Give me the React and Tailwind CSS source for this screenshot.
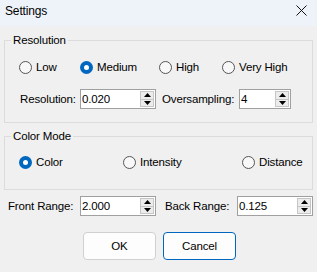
import React, { useState } from 'react';

const Radio = ({ checked, label, width, onClick }) => (
  <button
    type="button"
    onClick={onClick}
    className="flex items-center h-[15px] shrink-0 text-left"
    style={width ? { width } : undefined}
  >
    {checked ? (
      <span className="w-[13px] h-[13px] rounded-full bg-[#0067c0] flex items-center justify-center shrink-0">
        <span className="w-[5px] h-[5px] rounded-full bg-white" />
      </span>
    ) : (
      <span className="w-[13px] h-[13px] rounded-full border border-[#555] bg-[#f8f8f8] shrink-0" />
    )}
    <span className="ml-[4px]">{label}</span>
  </button>
);

const Spin = ({ value, width }) => (
  <div
    className="h-[20px] border border-[#a0a0a0] bg-white flex items-stretch shrink-0"
    style={{ width }}
  >
    <span className="flex-1 pl-[1px] leading-[18px]">{value}</span>
    <div className="w-[15px] flex flex-col py-[1px] pr-[1px]">
      <div className="flex-1 border border-[#c6c6c6] bg-[#ececec] flex items-center justify-center">
        <svg width="7" height="4" viewBox="0 0 7 4"><path d="M0 4 L3.5 0 L7 4 Z" fill="#000" /></svg>
      </div>
      <div className="flex-1 border border-t-0 border-[#c6c6c6] bg-[#ececec] flex items-center justify-center">
        <svg width="7" height="4" viewBox="0 0 7 4"><path d="M0 0 L3.5 4 L7 0 Z" fill="#000" /></svg>
      </div>
    </div>
  </div>
);

export default function App() {
  const [res, setRes] = useState('medium');
  const [mode, setMode] = useState('color');

  return (
    <div
      className="w-[317px] h-[272px] bg-[#f0f0f0] overflow-hidden text-[11.5px] leading-[15px] tracking-[-0.15px] text-black"
      style={{ fontFamily: '"Liberation Sans", Arial, sans-serif' }}
    >
      {/* Title bar */}
      <div className="h-[26px] bg-[#eef3fa] flex items-center justify-between pl-[5px] pr-[10px]">
        <span className="text-[12px] -mt-[4px]">Settings</span>
        <svg width="11" height="11" viewBox="0 0 11 11" className="-mt-[5px]">
          <path d="M0.5 0.5 L10.5 10.5 M10.5 0.5 L0.5 10.5" stroke="#111" strokeWidth="1" />
        </svg>
      </div>

      {/* Resolution */}
      <fieldset className="ml-[4px] mt-[7px] w-[309px] h-[90px] border border-[#dcdcdc]">
        <legend className="ml-[6px] px-[2px]">Resolution</legend>
        <div className="flex pl-[14px] pt-[12px]">
          <Radio width="61px" label="Low" checked={res === 'low'} onClick={() => setRes('low')} />
          <Radio width="79px" label="Medium" checked={res === 'medium'} onClick={() => setRes('medium')} />
          <Radio width="63px" label="High" checked={res === 'high'} onClick={() => setRes('high')} />
          <Radio label="Very High" checked={res === 'vhigh'} onClick={() => setRes('vhigh')} />
        </div>
        <div className="flex items-center pl-[15px] mt-[14px]">
          <span className="w-[60px] shrink-0">Resolution:</span>
          <Spin value="0.020" width="76px" />
          <span className="ml-[6px] w-[77px] shrink-0">Oversampling:</span>
          <Spin value="4" width="52px" />
        </div>
      </fieldset>

      {/* Color Mode */}
      <fieldset className="ml-[4px] mt-[6px] w-[309px] h-[61px] border border-[#dcdcdc]">
        <legend className="ml-[6px] px-[2px]">Color Mode</legend>
        <div className="flex pl-[14px] pt-[11px]">
          <Radio width="104px" label="Color" checked={mode === 'color'} onClick={() => setMode('color')} />
          <Radio width="119px" label="Intensity" checked={mode === 'intensity'} onClick={() => setMode('intensity')} />
          <Radio label="Distance" checked={mode === 'distance'} onClick={() => setMode('distance')} />
        </div>
      </fieldset>

      {/* Ranges */}
      <div className="flex items-center mt-[6px]">
        <span className="ml-[8px] w-[72px] shrink-0">Front Range:</span>
        <Spin value="2.000" width="76px" />
        <span className="ml-[9px] w-[72px] shrink-0">Back Range:</span>
        <Spin value="0.125" width="76px" />
      </div>

      {/* Buttons */}
      <div className="flex mt-[16px] ml-[83px] gap-[7px]">
        <button className="w-[73px] h-[28px] rounded-[4px] border border-[#d0d0d0] bg-[#fdfdfd]">OK</button>
        <button className="w-[73px] h-[28px] rounded-[4px] border border-[#0067c0] bg-[#fdfdfd]">Cancel</button>
      </div>
    </div>
  );
}
